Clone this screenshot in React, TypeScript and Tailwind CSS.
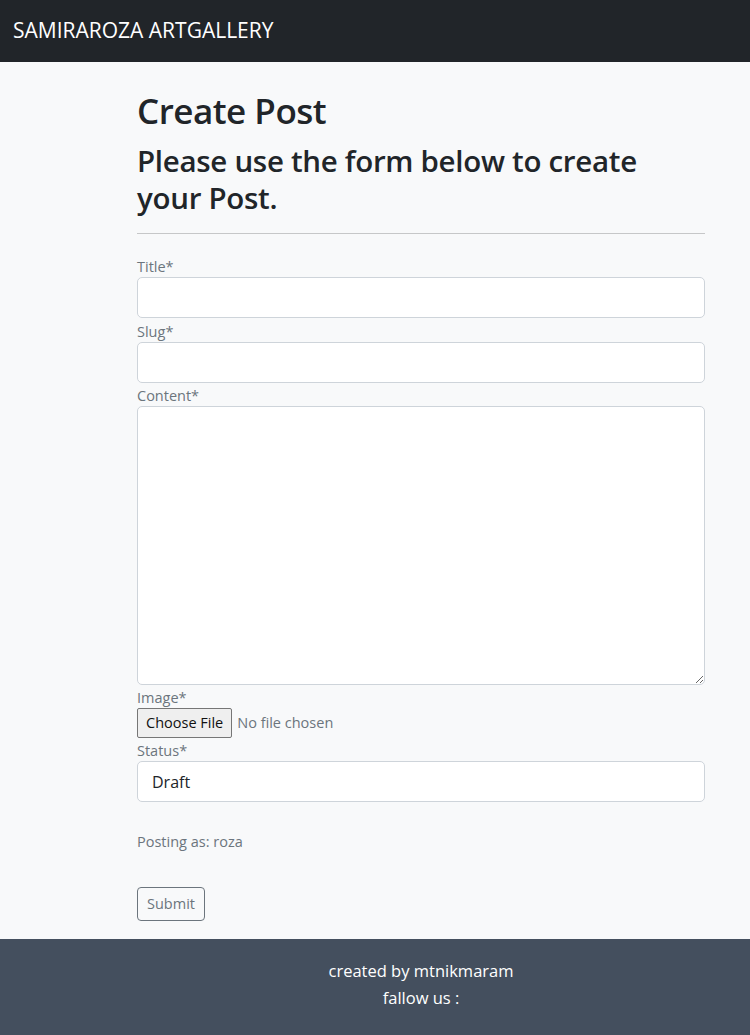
export default function App() {
  const font = { fontFamily: '"Open Sans", "Noto Sans", sans-serif' };
  return (
    <div className="min-h-screen bg-[#f8f9fa] text-[#212529] flex flex-col" style={font}>
      <nav className="h-[62px] bg-[#212529] flex items-center px-[13px]">
        <span className="text-white text-[21px]">SAMIRAROZA ARTGALLERY</span>
      </nav>

      <main className="w-[568px] ml-[137px] pt-[27px] pb-[18px]">
        <h1 className="text-[35px] leading-[44px] font-semibold tracking-[-0.5px]">Create Post</h1>
        <h2 className="text-[29.5px] leading-[37px] font-semibold mt-[9px] tracking-[-0.3px]">
          Please use the form below to create
          <br />
          your Post.
        </h2>
        <hr className="border-t border-[#c6c7c8] mt-[17px] mb-[27px]" />

        <form className="flex flex-col text-[14.5px]">
          <label className="text-[#6c757d] leading-[18px] -mt-[3px]">Title*</label>
          <input className="h-[41px] bg-white border border-[#ced4da] rounded-[5px] mt-[1px]" />
          <label className="text-[#6c757d] leading-[18px] mt-[5px]">Slug*</label>
          <input className="h-[41px] bg-white border border-[#ced4da] rounded-[5px] mt-[1px]" />
          <label className="text-[#6c757d] leading-[18px] mt-[4px]">Content*</label>
          <textarea className="h-[279px] bg-white border border-[#ced4da] rounded-[5px] mt-[1px]" />
          <label className="text-[#6c757d] leading-[18px] mt-[4px]">Image*</label>
          <div className="flex items-center mt-[1px]">
            <span className="h-[30px] px-[8px] flex items-center bg-[#efefef] border border-[#767676] rounded-[2px] text-[#111] text-[14.5px]">
              Choose File
            </span>
            <span className="ml-[5px] text-[#6c757d] text-[14.5px]">No file chosen</span>
          </div>
          <label className="text-[#6c757d] leading-[18px] mt-[4px]">Status*</label>
          <div className="h-[41px] bg-white border border-[#ced4da] rounded-[5px] mt-[1px] flex items-center px-[14px] text-[16px] text-[#212529]">
            Draft
          </div>
          <p className="text-[#6c757d] mt-[30px] leading-[20px]">Posting as: roza</p>
          <div className="mt-[35px]">
            <button type="button" className="h-[34px] px-[9px] border border-[#6c757d] rounded-[4px] text-[#6c757d] text-[14.5px]">
              Submit
            </button>
          </div>
        </form>
      </main>

      <footer className="flex-1 bg-[#444f5e] pt-[18px] pb-[24px]">
        <div className="w-[568px] ml-[137px] text-center text-white text-[16.5px] leading-[27px]">
          <p>created by mtnikmaram</p>
          <p>fallow us :</p>
        </div>
      </footer>
    </div>
  );
}
